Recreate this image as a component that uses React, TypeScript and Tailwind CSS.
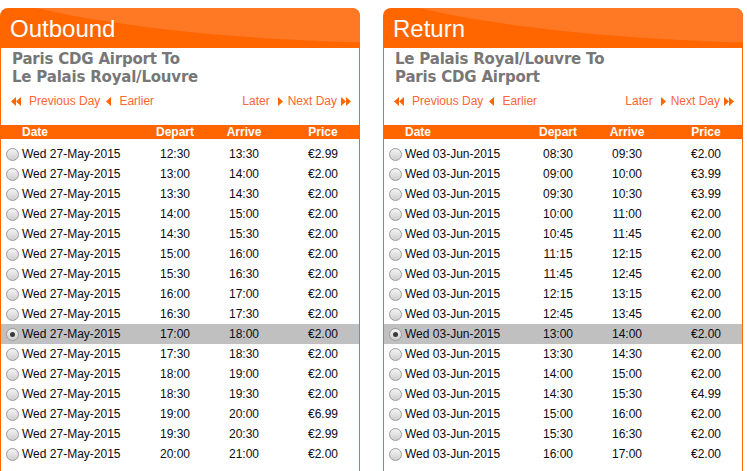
const outbound = [
  ['12:30', '13:30', '€2.99'],
  ['13:00', '14:00', '€2.00'],
  ['13:30', '14:30', '€2.00'],
  ['14:00', '15:00', '€2.00'],
  ['14:30', '15:30', '€2.00'],
  ['15:00', '16:00', '€2.00'],
  ['15:30', '16:30', '€2.00'],
  ['16:00', '17:00', '€2.00'],
  ['16:30', '17:30', '€2.00'],
  ['17:00', '18:00', '€2.00'],
  ['17:30', '18:30', '€2.00'],
  ['18:00', '19:00', '€2.00'],
  ['18:30', '19:30', '€2.00'],
  ['19:00', '20:00', '€6.99'],
  ['19:30', '20:30', '€2.99'],
  ['20:00', '21:00', '€2.00'],
]

const returns = [
  ['08:30', '09:30', '€2.00'],
  ['09:00', '10:00', '€3.99'],
  ['09:30', '10:30', '€3.99'],
  ['10:00', '11:00', '€2.00'],
  ['10:45', '11:45', '€2.00'],
  ['11:15', '12:15', '€2.00'],
  ['11:45', '12:45', '€2.00'],
  ['12:15', '13:15', '€2.00'],
  ['12:45', '13:45', '€2.00'],
  ['13:00', '14:00', '€2.00'],
  ['13:30', '14:30', '€2.00'],
  ['14:00', '15:00', '€2.00'],
  ['14:30', '15:30', '€4.99'],
  ['15:00', '16:00', '€2.00'],
  ['15:30', '16:30', '€2.00'],
  ['16:00', '17:00', '€2.00'],
]

function DoubleArrow({ dir }: { dir: 'left' | 'right' }) {
  return (
    <svg width="10" height="9" viewBox="0 0 10 9" className="shrink-0">
      {dir === 'left' ? (
        <>
          <polygon points="5,0 0,4.5 5,9" fill="#ff6600" />
          <polygon points="10,0 5,4.5 10,9" fill="#ff6600" />
        </>
      ) : (
        <>
          <polygon points="0,0 5,4.5 0,9" fill="#ff6600" />
          <polygon points="5,0 10,4.5 5,9" fill="#ff6600" />
        </>
      )}
    </svg>
  )
}

function Arrow({ dir }: { dir: 'left' | 'right' }) {
  return (
    <svg width="5" height="9" viewBox="0 0 5 9" className="shrink-0">
      <polygon points={dir === 'left' ? '5,0 0,4.5 5,9' : '0,0 5,4.5 0,9'} fill="#ff6600" />
    </svg>
  )
}

function Radio({ checked }: { checked: boolean }) {
  return (
    <span className="flex h-[13px] w-[13px] items-center justify-center rounded-full border border-[#9a9a9a] bg-gradient-to-b from-[#f4f4f4] to-[#cfcfcf]">
      {checked && <span className="h-[5px] w-[5px] rounded-full bg-[#3a3a3a]" />}
    </span>
  )
}

function Panel({
  title,
  from,
  to,
  date,
  rows,
  selected,
}: {
  title: string
  from: string
  to: string
  date: string
  rows: string[][]
  selected: number
}) {
  return (
    <div className="w-[360px] shrink-0">
      <div className="relative h-[40px] overflow-hidden rounded-t-[8px] bg-[#ff6600]">
        <div className="absolute left-[-80px] top-[-160px] h-[195px] w-[1000px] rounded-[50%] bg-[#ff7823]" />
        <div className="relative pl-[10px] pt-[7px] text-[24px] leading-[28px] text-white">{title}</div>
      </div>
      <div className="border-x border-[#ff6600] bg-white pb-[20px]">
        <div
          className="pl-[11px] pt-[2px] text-[15px] font-bold leading-[18px] tracking-[-0.2px] text-[#777]"
          style={{ fontFamily: '"DejaVu Sans", Verdana, sans-serif' }}
        >
          <div>{from} To</div>
          <div>{to}</div>
        </div>
        <div className="mt-[8px] flex h-[14px] items-center justify-between pl-[10px] pr-[8px] text-[12px] leading-[14px] text-[#ff6633]">
          <div className="flex items-center">
            <DoubleArrow dir="left" />
            <span className="ml-[8px]">Previous Day</span>
            <span className="ml-[6px]"><Arrow dir="left" /></span>
            <span className="ml-[8px]">Earlier</span>
          </div>
          <div className="flex items-center">
            <span>Later</span>
            <span className="ml-[8px]"><Arrow dir="right" /></span>
            <span className="ml-[5px]">Next Day</span>
            <span className="ml-[4px]"><DoubleArrow dir="right" /></span>
          </div>
        </div>
        <div className="mt-[17px] grid h-[14px] grid-cols-[21px_128px_50px_88px_70px] items-center bg-[#ff6600] text-[12px] font-bold leading-[14px] text-white">
          <span />
          <span>Date</span>
          <span className="text-center">Depart</span>
          <span className="text-center">Arrive</span>
          <span className="text-center">Price</span>
        </div>
        <div className="mt-[5px]">
          {rows.map((r, i) => (
            <div
              key={i}
              className={`grid h-[20px] grid-cols-[21px_128px_50px_88px_70px] items-center text-[12px] text-[#0a0a14] ${
                i === selected ? 'bg-[#c0c0c0]' : ''
              }`}
            >
              <span className="flex justify-end pr-[3px]">
                <Radio checked={i === selected} />
              </span>
              <span>{date}</span>
              <span className="text-center">{r[0]}</span>
              <span className="text-center">{r[1]}</span>
              <span className="text-center">{r[2]}</span>
            </div>
          ))}
        </div>
      </div>
    </div>
  )
}

export default function App() {
  return (
    <div
      className="min-h-screen bg-white pt-[8px]"
      style={{ fontFamily: '"Liberation Sans", Arial, sans-serif' }}
    >
      <div className="flex gap-[23px]">
        <Panel
          title="Outbound"
          from="Paris CDG Airport"
          to="Le Palais Royal/Louvre"
          date="Wed 27-May-2015"
          rows={outbound}
          selected={9}
        />
        <Panel
          title="Return"
          from="Le Palais Royal/Louvre"
          to="Paris CDG Airport"
          date="Wed 03-Jun-2015"
          rows={returns}
          selected={9}
        />
      </div>
    </div>
  )
}
